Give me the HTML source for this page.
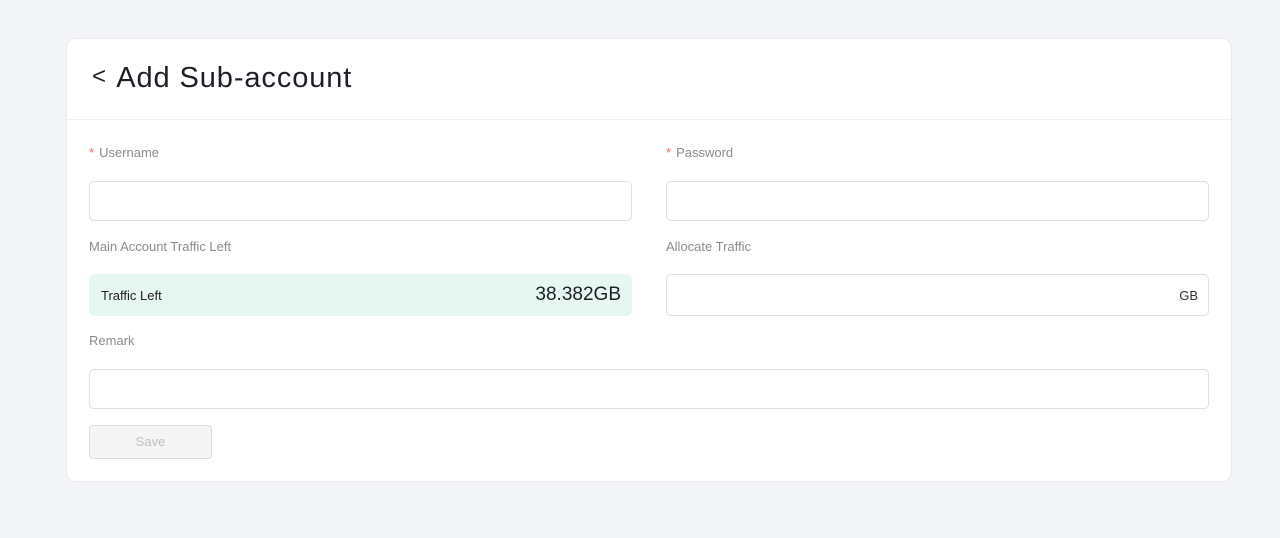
<!DOCTYPE html>
<html><head><meta charset="utf-8"><style>
*{box-sizing:border-box;margin:0;padding:0}
body{width:1280px;height:538px;background:#f3f4f6;font-family:"Liberation Sans",sans-serif;position:relative;overflow:hidden}
.card{position:absolute;left:66px;top:38px;width:1166px;height:444px;background:#fff;border:1px solid #e6e8eb;border-radius:10px}
.hdr{position:absolute;left:0;top:0;width:100%;height:81px;border-bottom:1px solid #eef0f2}
.title{position:absolute;left:25px;top:23px;font-size:29px;color:#1c1f26;letter-spacing:0.9px}
.title .c{font-size:24px;position:relative;top:-3px;margin-right:2px}
.lbl{position:absolute;font-size:13px;color:#8c8c8c}
.lbl .s{color:#f5636b;margin-right:5px}
.in{position:absolute;height:40px;border:1px solid #dcdfe4;border-radius:5px;background:#fff}
</style></head><body>
<div class="card">
<div class="hdr"><div class="title"><span class="c">&lt;</span> Add Sub-account</div></div>
<div class="lbl" style="left:22px;top:106px"><span class="s">*</span>Username</div>
<div class="lbl" style="left:599px;top:106px"><span class="s">*</span>Password</div>
<div class="in" style="left:22px;top:142px;width:543px"></div>
<div class="in" style="left:599px;top:142px;width:543px"></div>
<div class="lbl" style="left:22px;top:200px">Main Account Traffic Left</div>
<div class="lbl" style="left:599px;top:200px">Allocate Traffic</div>
<div style="position:absolute;left:22px;top:235px;width:543px;height:42px;background:#e6f7f2;border-radius:6px">
<span style="position:absolute;left:12px;top:14px;font-size:13px;color:#222">Traffic Left</span>
<span style="position:absolute;right:11px;top:10px;font-size:19px;color:#1c1f26">38.382GB</span></div>
<div class="in" style="left:599px;top:235px;width:543px;height:42px"><span style="position:absolute;right:10px;top:13px;font-size:13px;color:#333">GB</span></div>
<div class="lbl" style="left:22px;top:294px">Remark</div>
<div class="in" style="left:22px;top:330px;width:1120px"></div>
<div style="position:absolute;left:22px;top:386px;width:123px;height:34px;background:#f5f5f5;border:1px solid #dcdcdc;border-radius:4px;text-align:center;line-height:32px;font-size:13px;color:#c0c0c0">Save</div>
</div>
</body></html>
